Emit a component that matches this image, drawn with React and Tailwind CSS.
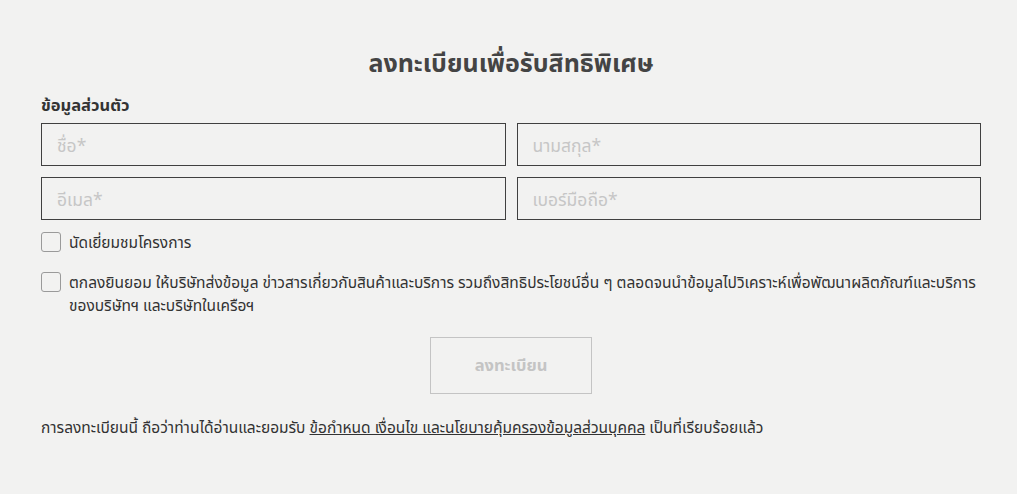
import { useState } from "react";

function Field({ placeholder }) {
    return (
        <input
            type="text"
            placeholder={placeholder}
            className="h-[43px] w-full border border-[#404040] bg-transparent px-[15px] text-[17.5px] text-[#333] placeholder:text-[#c6c6c6] outline-none"
        />
    );
}

function Check({ children, checked, onChange }) {
    return (
        <label className="flex items-start gap-[8px] cursor-pointer">
            <input type="checkbox" checked={checked} onChange={onChange} className="peer sr-only" />
            <span className="mt-[1px] size-[20px] shrink-0 rounded-[3px] border border-[#9a9a9a] bg-transparent" />
            <span className="text-[15.5px] leading-[23px] text-[#333]">{children}</span>
        </label>
    );
}

export default function App() {
    const [visit, setVisit] = useState(false);
    const [consent, setConsent] = useState(false);

    return (
        <div className="min-h-[494px] w-full bg-[#f2f2f1] font-['Noto_Sans','Noto_Sans_Thai',sans-serif]">
            <div className="ml-[41px] w-[940px] pt-[44px]">
                <h1 className="text-center text-[25px] font-bold leading-[36px] text-[#444]">
                    ลงทะเบียนเพื่อรับสิทธิพิเศษ
                </h1>

                <h5 className="mt-[14px] text-[16.5px] font-bold leading-[22px] text-[#333]">ข้อมูลส่วนตัว</h5>

                <div className="mt-[7px] grid grid-cols-2 gap-x-[11px] gap-y-[11px]">
                    <Field placeholder="ชื่อ*" />
                    <Field placeholder="นามสกุล*" />
                    <Field placeholder="อีเมล*" />
                    <Field placeholder="เบอร์มือถือ*" />
                </div>

                <div className="mt-[11px] flex flex-col gap-[17px]">
                    <Check checked={visit} onChange={() => setVisit(!visit)}>
                        นัดเยี่ยมชมโครงการ
                    </Check>
                    <Check checked={consent} onChange={() => setConsent(!consent)}>
                        ตกลงยินยอม ให้บริษัทส่งข้อมูล ข่าวสารเกี่ยวกับสินค้าและบริการ รวมถึงสิทธิประโยชน์อื่น ๆ ตลอดจนนำข้อมูลไปวิเคราะห์เพื่อพัฒนาผลิตภัณฑ์และบริการ ของบริษัทฯ และบริษัทในเครือฯ
                    </Check>
                </div>

                <div className="mt-[20px] flex justify-center">
                    <button
                        type="button"
                        className="h-[57px] w-[162px] border border-[#c4c4c4] text-[16.5px] font-bold text-[#c4c4c4]"
                    >
                        ลงทะเบียน
                    </button>
                </div>

                <p className="mt-[22px] text-[15.5px] leading-[22px] text-[#333]">
                    การลงทะเบียนนี้ ถือว่าท่านได้อ่านและยอมรับ{" "}
                    <a href="#" className="underline">ข้อกำหนด เงื่อนไข และนโยบายคุ้มครองข้อมูลส่วนบุคคล</a>{" "}
                    เป็นที่เรียบร้อยแล้ว
                </p>
            </div>
        </div>
    );
}
